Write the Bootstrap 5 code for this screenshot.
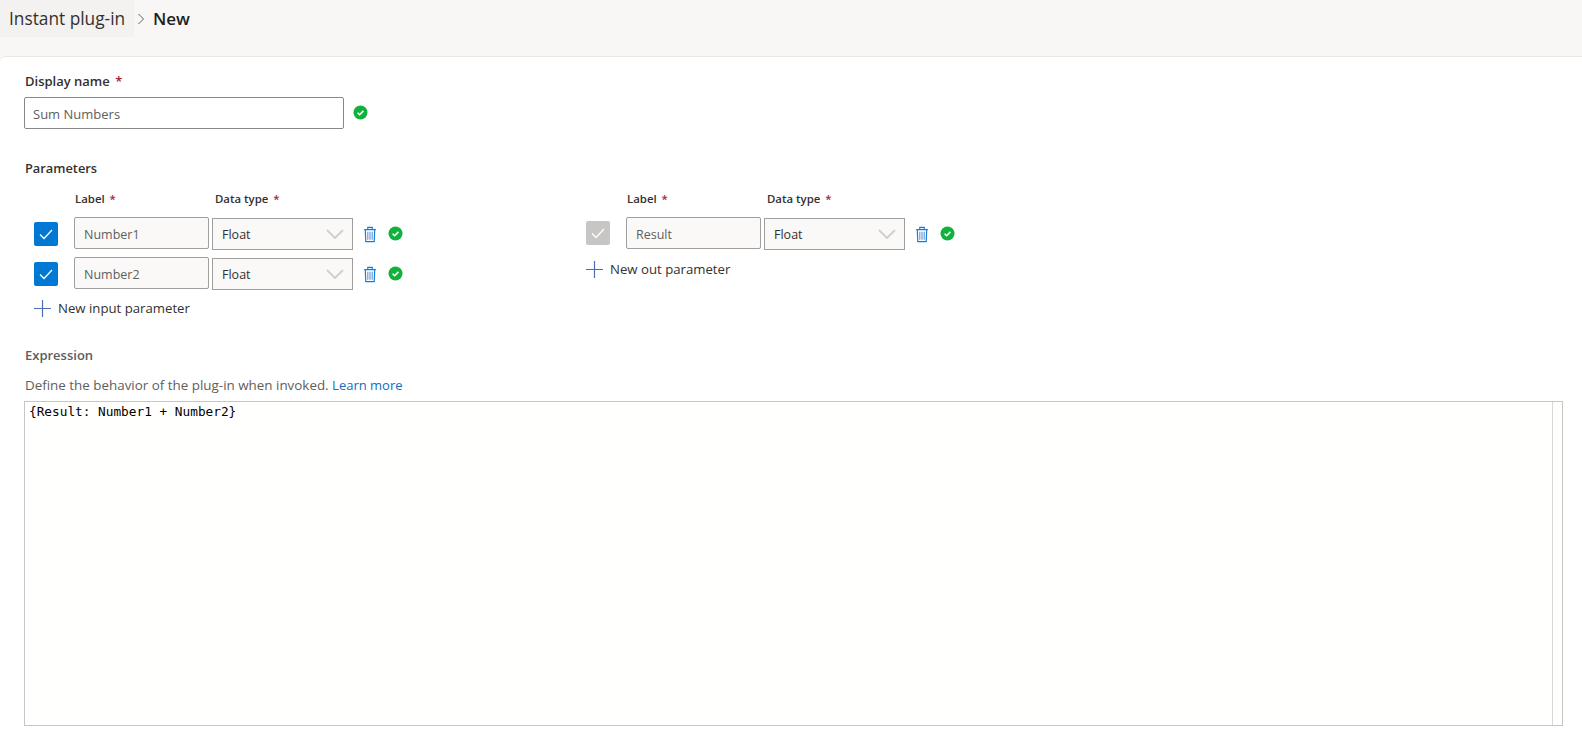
<!DOCTYPE html>
<html lang="en">
<head>
<meta charset="utf-8">
<title>New Instant plug-in</title>
<link href="https://cdn.jsdelivr.net/npm/bootstrap@5.3.0/dist/css/bootstrap.min.css" rel="stylesheet">
<style>
html,body{height:745px;overflow:hidden}
body{background:#f8f7f6;color:#323130;font-family:"Open Sans","Noto Sans",sans-serif;font-size:13px;line-height:18px}
.top-bar{height:56px;align-items:flex-start}
.crumb-tab{width:134px;height:37px;background:#f3f2f1;padding:9px 0 0 9px;font-size:17.3px;line-height:20px;color:#323130}
.crumb-sep{margin:13px 8px 0 3px;display:block}
.crumb-cur{font-size:17px;font-weight:600;padding-top:9px;line-height:20px;color:#201f1e;margin-left:-1px}
.panel{height:689px;background:#fff;border-top:1px solid #e9e8e7;border-top-left-radius:6px;padding:15px 19px 0 25px}
.fld-label{font-size:13px;font-weight:600;line-height:18px;color:#323130}
.req{color:#a4262c;margin-left:2px;font-weight:600}
.name-row{margin-top:7px;margin-left:-1px}
.name-input.form-control{width:320px;height:32px;border:1px solid #8a8886;border-radius:2px;padding:2px 8px 0;font-size:13px;color:#605e5c;background:#fff;box-shadow:none}
.name-ok{display:block;flex:none;margin:8px 0 0 9px}
.fld-label.params-title{margin-top:30px;margin-bottom:13px;font-size:12.8px}
.param-group{margin-left:-1px}
.param-col{width:551px;padding-left:10px}
.param-col-wide{padding-left:11px}
.head-row{height:18px;margin-bottom:9px}
.head-row.fld-label{font-size:11.4px}
.head-lab{margin-left:41px;width:140px}
.param-row{height:32px;margin-bottom:8px}
.tick{width:24px;height:24px;border-radius:2px;background:#0078d4;margin-right:16px;margin-top:5px;flex:none}
.tick-off{background:#c8c6c4;margin-top:4px}
.param-input.form-control{width:135px;height:32px;background:#faf9f8;border:1px solid #a19f9d;border-radius:2px;padding:2px 9px 0;font-size:12.5px;color:#605e5c;box-shadow:none;flex:none}
.param-select{width:141px;height:32px;margin:1px 0 0 3px;background:#faf9f8;border:1px solid #a19f9d;padding:2px 8px 0 9px;font-size:12.5px;color:#323130;flex:none}
.param-select svg{margin-top:-2px}
.bin{margin:9px 11px 0 10px;flex:none;display:block}
.ok-dot{display:block;flex:none;margin-top:9px}
.add-line{height:18px;font-size:13.2px;color:#323130;margin-top:10px}
.add-line-out{margin-top:11px}
.add-line svg{margin-right:7px;flex:none}
.fld-label.expr-title{color:#605e5c;margin-top:29px}
.expr-hint{color:#605e5c;font-size:13.4px;margin-top:12px;line-height:18px}
.expr-hint a{color:#106ebe;text-decoration:none;font-size:13px}
.code-area{height:325px;margin-top:7px;margin-left:-1px;border:1px solid #c8c6c4;background:#fffffd;padding-right:9px}
.code-main{border-right:1px solid #d9d8d6;padding:1px 4px;font-family:"DejaVu Sans Mono","Liberation Mono",monospace;font-size:12.75px;line-height:18px;color:#000;white-space:pre}
</style>
</head>
<body>
<header class="top-bar d-flex">
  <div class="crumb-tab">Instant plug-in</div>
  <svg class="crumb-sep" width="9" height="12" viewBox="0 0 9 12"><path d="M1.5 1l5 5-5 5" fill="none" stroke="#605e5c" stroke-width="1"/></svg>
  <div class="crumb-cur">New</div>
</header>
<main class="panel">
  <div class="fld-label">Display name <span class="req">*</span></div>
  <div class="d-flex name-row">
    <input class="form-control name-input" value="Sum Numbers" aria-label="Display name">
    <svg class="name-ok" width="15" height="15" viewBox="0 0 15 15"><circle cx="7.5" cy="7.5" r="7" fill="#0fb33c"/><path d="M4.6 7.7l2 2 3.8-3.8" fill="none" stroke="#fff" stroke-width="1.6"/></svg>
  </div>

  <div class="fld-label params-title">Parameters</div>
  <div class="d-flex param-group">
    <section class="param-col">
      <div class="head-row d-flex fld-label">
        <div class="head-lab">Label <span class="req">*</span></div>
        <div>Data type <span class="req">*</span></div>
      </div>
      <div class="param-row d-flex">
        <div class="tick d-flex align-items-center justify-content-center"><svg width="16" height="12" viewBox="0 0 16 12"><path d="M2 6.5l4 4 8-8.5" fill="none" stroke="#fff" stroke-width="1.3"/></svg></div>
        <input class="form-control param-input" value="Number1" aria-label="Label">
        <div class="param-select d-flex align-items-center justify-content-between">Float<svg width="18" height="10" viewBox="0 0 18 10"><path d="M1 1l8 8 8-8" fill="none" stroke="#d2d0ce" stroke-width="2"/></svg></div>
        <svg class="bin" width="14" height="17" viewBox="0 0 15 19"><path d="M1 4h13M5 4V1.5h5V4M2.2 4l.6 13.5h9.4l.6-13.5" fill="none" stroke="#0f7fdc" stroke-width="1.3"/><path d="M5 6.5v9M7.5 6.5v9M10 6.5v9" stroke="#7fa6dc" stroke-width="1.5"/></svg>
        <svg class="ok-dot" width="15" height="15" viewBox="0 0 15 15"><circle cx="7.5" cy="7.5" r="7" fill="#0fb33c"/><path d="M4.6 7.7l2 2 3.8-3.8" fill="none" stroke="#fff" stroke-width="1.6"/></svg>
      </div>
      <div class="param-row d-flex">
        <div class="tick d-flex align-items-center justify-content-center"><svg width="16" height="12" viewBox="0 0 16 12"><path d="M2 6.5l4 4 8-8.5" fill="none" stroke="#fff" stroke-width="1.3"/></svg></div>
        <input class="form-control param-input" value="Number2" aria-label="Label">
        <div class="param-select d-flex align-items-center justify-content-between">Float<svg width="18" height="10" viewBox="0 0 18 10"><path d="M1 1l8 8 8-8" fill="none" stroke="#d2d0ce" stroke-width="2"/></svg></div>
        <svg class="bin" width="14" height="17" viewBox="0 0 15 19"><path d="M1 4h13M5 4V1.5h5V4M2.2 4l.6 13.5h9.4l.6-13.5" fill="none" stroke="#0f7fdc" stroke-width="1.3"/><path d="M5 6.5v9M7.5 6.5v9M10 6.5v9" stroke="#7fa6dc" stroke-width="1.5"/></svg>
        <svg class="ok-dot" width="15" height="15" viewBox="0 0 15 15"><circle cx="7.5" cy="7.5" r="7" fill="#0fb33c"/><path d="M4.6 7.7l2 2 3.8-3.8" fill="none" stroke="#fff" stroke-width="1.6"/></svg>
      </div>
      <div class="add-line d-flex align-items-center"><svg width="17" height="17" viewBox="0 0 17 17"><path d="M0 8.5h17M8.5 0v17" stroke="#4a6fb5" stroke-width="1.2"/></svg>New input parameter</div>
    </section>
    <section class="param-col param-col-wide">
      <div class="head-row d-flex fld-label">
        <div class="head-lab">Label <span class="req">*</span></div>
        <div>Data type <span class="req">*</span></div>
      </div>
      <div class="param-row d-flex">
        <div class="tick tick-off d-flex align-items-center justify-content-center"><svg width="16" height="12" viewBox="0 0 16 12"><path d="M2 6.5l4 4 8-8.5" fill="none" stroke="#fff" stroke-width="1.3"/></svg></div>
        <input class="form-control param-input" value="Result" aria-label="Label">
        <div class="param-select d-flex align-items-center justify-content-between">Float<svg width="18" height="10" viewBox="0 0 18 10"><path d="M1 1l8 8 8-8" fill="none" stroke="#d2d0ce" stroke-width="2"/></svg></div>
        <svg class="bin" width="14" height="17" viewBox="0 0 15 19"><path d="M1 4h13M5 4V1.5h5V4M2.2 4l.6 13.5h9.4l.6-13.5" fill="none" stroke="#0f7fdc" stroke-width="1.3"/><path d="M5 6.5v9M7.5 6.5v9M10 6.5v9" stroke="#7fa6dc" stroke-width="1.5"/></svg>
        <svg class="ok-dot" width="15" height="15" viewBox="0 0 15 15"><circle cx="7.5" cy="7.5" r="7" fill="#0fb33c"/><path d="M4.6 7.7l2 2 3.8-3.8" fill="none" stroke="#fff" stroke-width="1.6"/></svg>
      </div>
      <div class="add-line add-line-out d-flex align-items-center"><svg width="17" height="17" viewBox="0 0 17 17"><path d="M0 8.5h17M8.5 0v17" stroke="#4a6fb5" stroke-width="1.2"/></svg>New out parameter</div>
    </section>
  </div>

  <div class="fld-label expr-title">Expression</div>
  <div class="expr-hint">Define the behavior of the plug-in when invoked. <a href="#">Learn more</a></div>
  <div class="code-area d-flex flex-column">
    <div class="code-main flex-grow-1">{Result: Number1 + Number2}</div>
  </div>
</main>
<script src="https://cdn.jsdelivr.net/npm/bootstrap@5.3.0/dist/js/bootstrap.bundle.min.js"></script>
</body>
</html>
